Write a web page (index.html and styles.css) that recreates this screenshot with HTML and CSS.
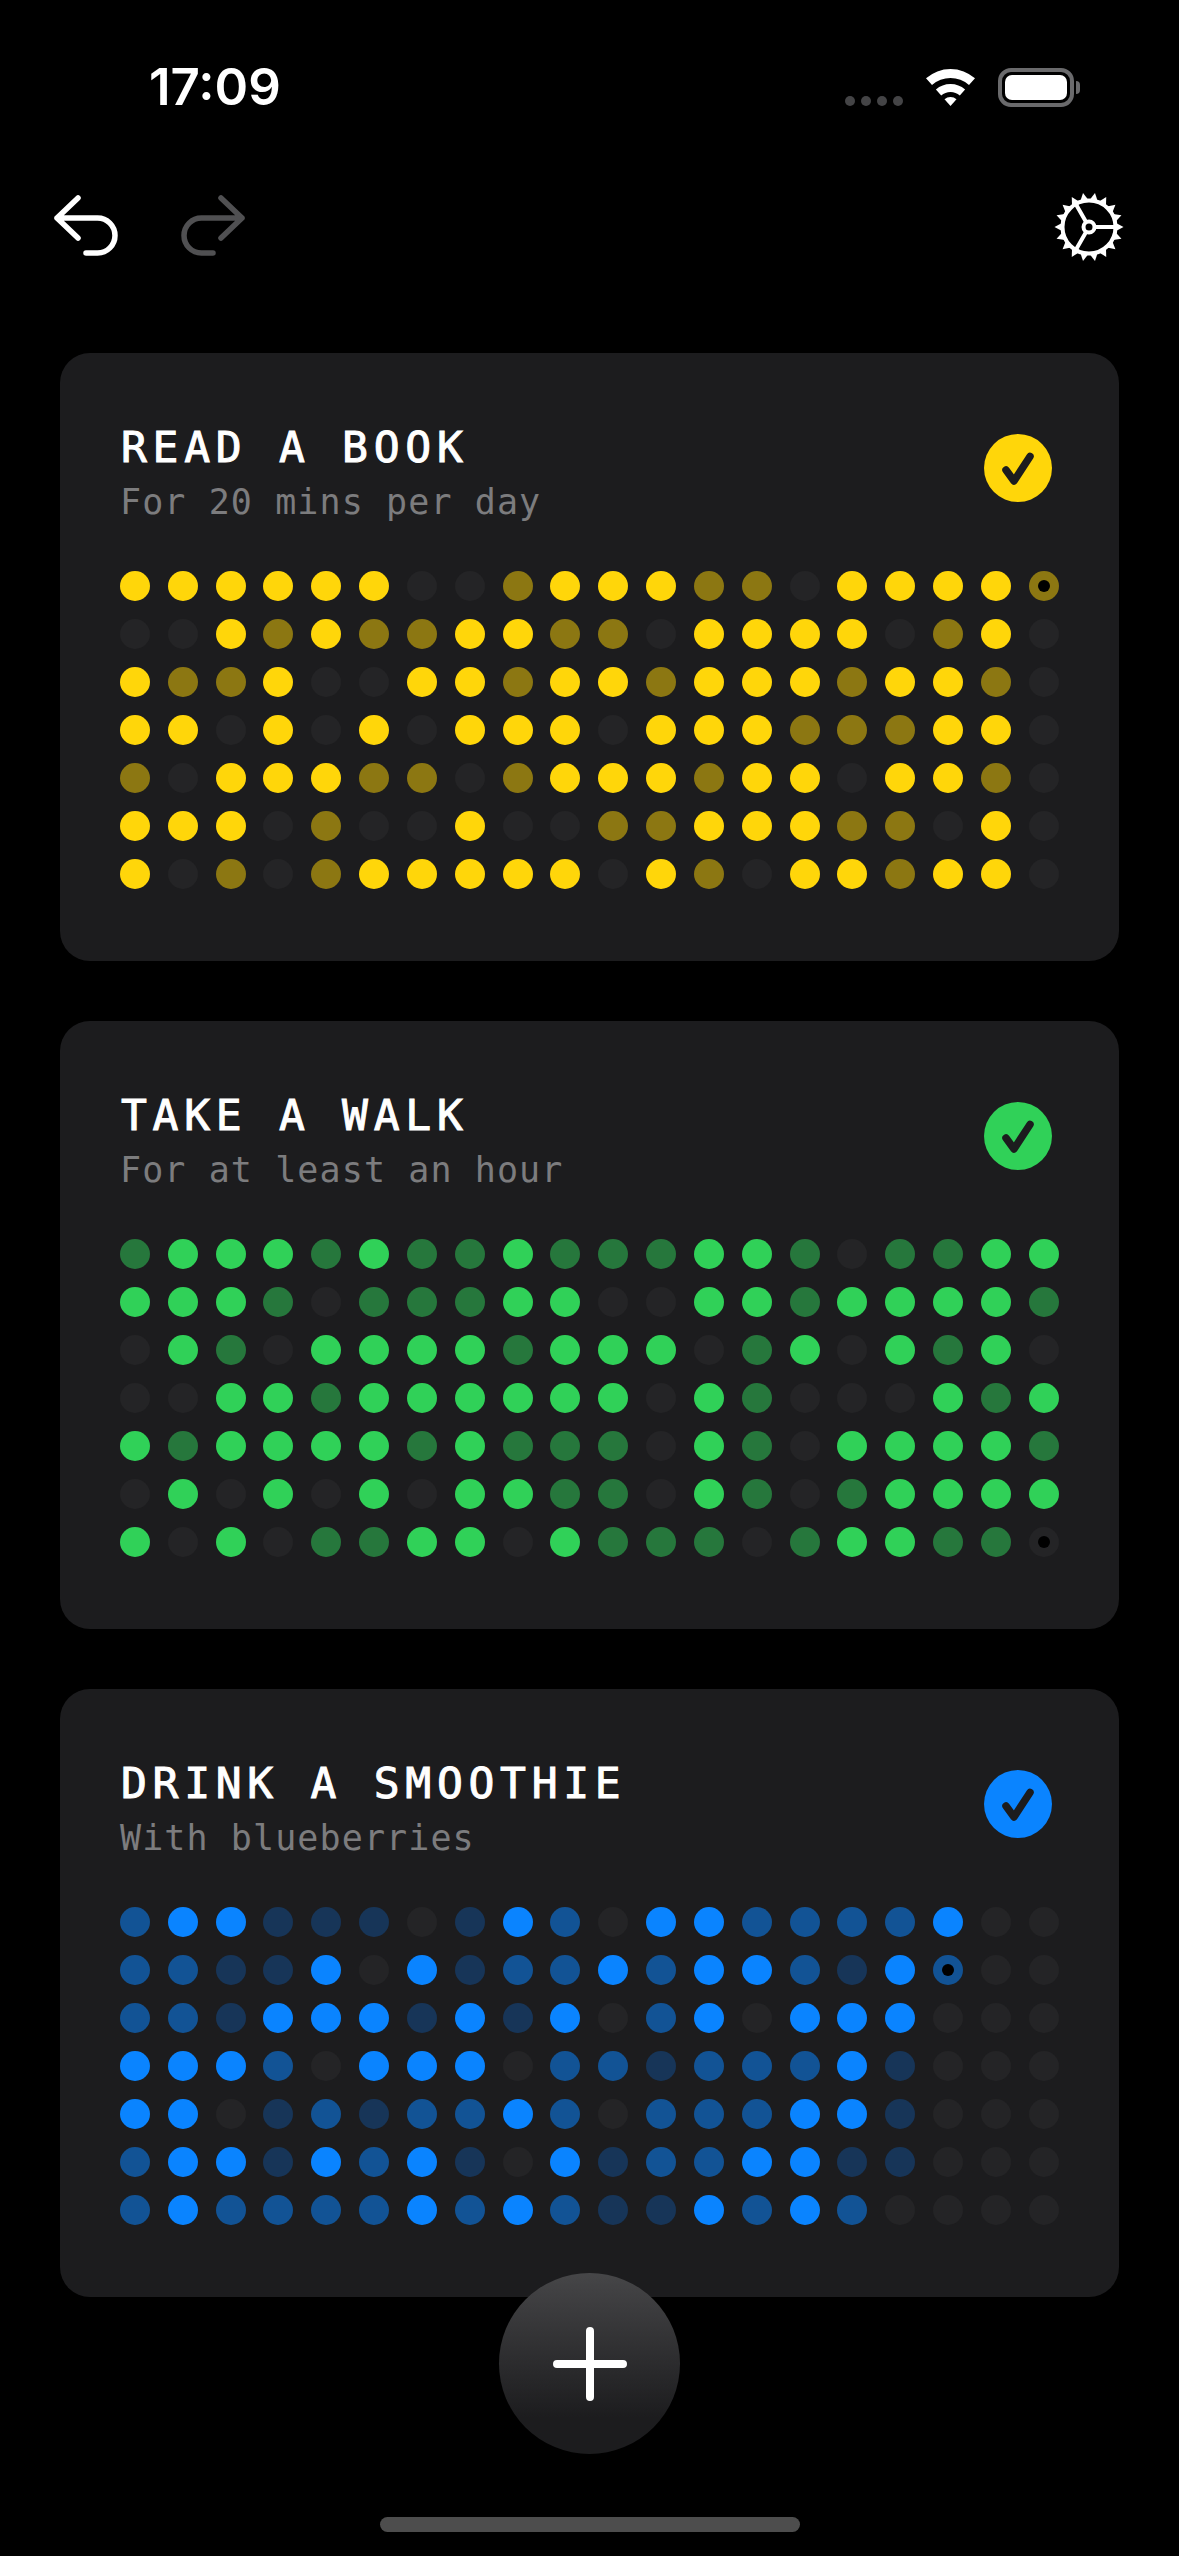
FILE: index.html
```html
<!DOCTYPE html>
<html lang="en">
<head>
    <meta charset="UTF-8">
    <meta name="viewport" content="width=device-width, initial-scale=1.0">
    <title>Habits</title>
    <link rel="stylesheet" href="styles.css">
</head>
<body>

<div class="status-bar">
    <span class="time">17:09</span>
    <div class="status-icons">
        <div class="signal"><i></i><i></i><i></i><i></i></div>
        <svg class="wifi" width="49" height="37" viewBox="0 0 49 37">
            <path d="M0 9.3A37 37 0 0 1 49 9.3L43 16A28 28 0 0 0 6 16z"/>
            <path d="M9.9 20.5A22 22 0 0 1 39.1 20.5L33.8 26.5A14 14 0 0 0 15.2 26.5z"/>
            <path d="M24.5 37L18.5 30.3A9 9 0 0 1 30.5 30.3z"/>
        </svg>
        <div class="battery"><div class="battery-level"></div></div>
    </div>
</div>

<div class="toolbar">
    <div class="history">
        <svg width="64" height="60" viewBox="0 0 64 60" class="nav-icon">
            <path d="M24 4L3 24L24 44M3 24H43.500A17.500 17.500 0 0 1 43.500 59H32"/>
        </svg>
        <svg width="64" height="60" viewBox="0 0 64 60" class="nav-icon off">
            <path d="M40 4L61 24L40 44M61 24H20.500A17.500 17.500 0 0 0 20.500 59H32"/>
        </svg>
    </div>
    <svg class="gear" width="70" height="70" viewBox="-35 -35 70 70">
        <defs><path id="tooth" d="M-4 -27L0 -34.500L4 -27z"/></defs>
        <use href="#tooth" transform="rotate(10)"/>
        <use href="#tooth" transform="rotate(30)"/>
        <use href="#tooth" transform="rotate(50)"/>
        <use href="#tooth" transform="rotate(70)"/>
        <use href="#tooth" transform="rotate(90)"/>
        <use href="#tooth" transform="rotate(110)"/>
        <use href="#tooth" transform="rotate(130)"/>
        <use href="#tooth" transform="rotate(150)"/>
        <use href="#tooth" transform="rotate(170)"/>
        <use href="#tooth" transform="rotate(190)"/>
        <use href="#tooth" transform="rotate(210)"/>
        <use href="#tooth" transform="rotate(230)"/>
        <use href="#tooth" transform="rotate(250)"/>
        <use href="#tooth" transform="rotate(270)"/>
        <use href="#tooth" transform="rotate(290)"/>
        <use href="#tooth" transform="rotate(310)"/>
        <use href="#tooth" transform="rotate(330)"/>
        <use href="#tooth" transform="rotate(350)"/>
        <circle class="gear-line" r="26.500"/>
        <circle class="gear-line" r="5.500"/>
        <path class="gear-line" d="M5.500 0H27M-2.800 -4.800L-13.500 -23.400M-2.800 4.800L-13.500 23.400"/>
    </svg>
</div>

<div class="cards">

    <section class="card yellow">
        <div class="card-head">
            <div>
                <h2>READ A BOOK</h2>
                <p>For 20 mins per day</p>
            </div>
            <div class="check"><svg width="68" height="68" viewBox="0 0 68 68"><path d="M22 36L30 47L46 22.500"/></svg></div>
        </div>
        <div class="dots">
            <i class="on"></i><i class="on"></i><i class="on"></i><i class="on"></i><i class="on"></i><i class="on"></i><i></i><i></i><i class="mid"></i><i class="on"></i><i class="on"></i><i class="on"></i><i class="mid"></i><i class="mid"></i><i></i><i class="on"></i><i class="on"></i><i class="on"></i><i class="on"></i><i class="mid today"></i>
            <i></i><i></i><i class="on"></i><i class="mid"></i><i class="on"></i><i class="mid"></i><i class="mid"></i><i class="on"></i><i class="on"></i><i class="mid"></i><i class="mid"></i><i></i><i class="on"></i><i class="on"></i><i class="on"></i><i class="on"></i><i></i><i class="mid"></i><i class="on"></i><i></i>
            <i class="on"></i><i class="mid"></i><i class="mid"></i><i class="on"></i><i></i><i></i><i class="on"></i><i class="on"></i><i class="mid"></i><i class="on"></i><i class="on"></i><i class="mid"></i><i class="on"></i><i class="on"></i><i class="on"></i><i class="mid"></i><i class="on"></i><i class="on"></i><i class="mid"></i><i></i>
            <i class="on"></i><i class="on"></i><i></i><i class="on"></i><i></i><i class="on"></i><i></i><i class="on"></i><i class="on"></i><i class="on"></i><i></i><i class="on"></i><i class="on"></i><i class="on"></i><i class="mid"></i><i class="mid"></i><i class="mid"></i><i class="on"></i><i class="on"></i><i></i>
            <i class="mid"></i><i></i><i class="on"></i><i class="on"></i><i class="on"></i><i class="mid"></i><i class="mid"></i><i></i><i class="mid"></i><i class="on"></i><i class="on"></i><i class="on"></i><i class="mid"></i><i class="on"></i><i class="on"></i><i></i><i class="on"></i><i class="on"></i><i class="mid"></i><i></i>
            <i class="on"></i><i class="on"></i><i class="on"></i><i></i><i class="mid"></i><i></i><i></i><i class="on"></i><i></i><i></i><i class="mid"></i><i class="mid"></i><i class="on"></i><i class="on"></i><i class="on"></i><i class="mid"></i><i class="mid"></i><i></i><i class="on"></i><i></i>
            <i class="on"></i><i></i><i class="mid"></i><i></i><i class="mid"></i><i class="on"></i><i class="on"></i><i class="on"></i><i class="on"></i><i class="on"></i><i></i><i class="on"></i><i class="mid"></i><i></i><i class="on"></i><i class="on"></i><i class="mid"></i><i class="on"></i><i class="on"></i><i></i>
        </div>
    </section>

    <section class="card green">
        <div class="card-head">
            <div>
                <h2>TAKE A WALK</h2>
                <p>For at least an hour</p>
            </div>
            <div class="check"><svg width="68" height="68" viewBox="0 0 68 68"><path d="M22 36L30 47L46 22.500"/></svg></div>
        </div>
        <div class="dots">
            <i class="mid"></i><i class="on"></i><i class="on"></i><i class="on"></i><i class="mid"></i><i class="on"></i><i class="mid"></i><i class="mid"></i><i class="on"></i><i class="mid"></i><i class="mid"></i><i class="mid"></i><i class="on"></i><i class="on"></i><i class="mid"></i><i></i><i class="mid"></i><i class="mid"></i><i class="on"></i><i class="on"></i>
            <i class="on"></i><i class="on"></i><i class="on"></i><i class="mid"></i><i></i><i class="mid"></i><i class="mid"></i><i class="mid"></i><i class="on"></i><i class="on"></i><i></i><i></i><i class="on"></i><i class="on"></i><i class="mid"></i><i class="on"></i><i class="on"></i><i class="on"></i><i class="on"></i><i class="mid"></i>
            <i></i><i class="on"></i><i class="mid"></i><i></i><i class="on"></i><i class="on"></i><i class="on"></i><i class="on"></i><i class="mid"></i><i class="on"></i><i class="on"></i><i class="on"></i><i></i><i class="mid"></i><i class="on"></i><i></i><i class="on"></i><i class="mid"></i><i class="on"></i><i></i>
            <i></i><i></i><i class="on"></i><i class="on"></i><i class="mid"></i><i class="on"></i><i class="on"></i><i class="on"></i><i class="on"></i><i class="on"></i><i class="on"></i><i></i><i class="on"></i><i class="mid"></i><i></i><i></i><i></i><i class="on"></i><i class="mid"></i><i class="on"></i>
            <i class="on"></i><i class="mid"></i><i class="on"></i><i class="on"></i><i class="on"></i><i class="on"></i><i class="mid"></i><i class="on"></i><i class="mid"></i><i class="mid"></i><i class="mid"></i><i></i><i class="on"></i><i class="mid"></i><i></i><i class="on"></i><i class="on"></i><i class="on"></i><i class="on"></i><i class="mid"></i>
            <i></i><i class="on"></i><i></i><i class="on"></i><i></i><i class="on"></i><i></i><i class="on"></i><i class="on"></i><i class="mid"></i><i class="mid"></i><i></i><i class="on"></i><i class="mid"></i><i></i><i class="mid"></i><i class="on"></i><i class="on"></i><i class="on"></i><i class="on"></i>
            <i class="on"></i><i></i><i class="on"></i><i></i><i class="mid"></i><i class="mid"></i><i class="on"></i><i class="on"></i><i></i><i class="on"></i><i class="mid"></i><i class="mid"></i><i class="mid"></i><i></i><i class="mid"></i><i class="on"></i><i class="on"></i><i class="mid"></i><i class="mid"></i><i class="today"></i>
        </div>
    </section>

    <section class="card blue">
        <div class="card-head">
            <div>
                <h2>DRINK A SMOOTHIE</h2>
                <p>With blueberries</p>
            </div>
            <div class="check"><svg width="68" height="68" viewBox="0 0 68 68"><path d="M22 36L30 47L46 22.500"/></svg></div>
        </div>
        <div class="dots">
            <i class="mid"></i><i class="on"></i><i class="on"></i><i class="low"></i><i class="low"></i><i class="low"></i><i></i><i class="low"></i><i class="on"></i><i class="mid"></i><i></i><i class="on"></i><i class="on"></i><i class="mid"></i><i class="mid"></i><i class="mid"></i><i class="mid"></i><i class="on"></i><i></i><i></i>
            <i class="mid"></i><i class="mid"></i><i class="low"></i><i class="low"></i><i class="on"></i><i></i><i class="on"></i><i class="low"></i><i class="mid"></i><i class="mid"></i><i class="on"></i><i class="mid"></i><i class="on"></i><i class="on"></i><i class="mid"></i><i class="low"></i><i class="on"></i><i class="mid today"></i><i></i><i></i>
            <i class="mid"></i><i class="mid"></i><i class="low"></i><i class="on"></i><i class="on"></i><i class="on"></i><i class="low"></i><i class="on"></i><i class="low"></i><i class="on"></i><i></i><i class="mid"></i><i class="on"></i><i></i><i class="on"></i><i class="on"></i><i class="on"></i><i></i><i></i><i></i>
            <i class="on"></i><i class="on"></i><i class="on"></i><i class="mid"></i><i></i><i class="on"></i><i class="on"></i><i class="on"></i><i></i><i class="mid"></i><i class="mid"></i><i class="low"></i><i class="mid"></i><i class="mid"></i><i class="mid"></i><i class="on"></i><i class="low"></i><i></i><i></i><i></i>
            <i class="on"></i><i class="on"></i><i></i><i class="low"></i><i class="mid"></i><i class="low"></i><i class="mid"></i><i class="mid"></i><i class="on"></i><i class="mid"></i><i></i><i class="mid"></i><i class="mid"></i><i class="mid"></i><i class="on"></i><i class="on"></i><i class="low"></i><i></i><i></i><i></i>
            <i class="mid"></i><i class="on"></i><i class="on"></i><i class="low"></i><i class="on"></i><i class="mid"></i><i class="on"></i><i class="low"></i><i></i><i class="on"></i><i class="low"></i><i class="mid"></i><i class="mid"></i><i class="on"></i><i class="on"></i><i class="low"></i><i class="low"></i><i></i><i></i><i></i>
            <i class="mid"></i><i class="on"></i><i class="mid"></i><i class="mid"></i><i class="mid"></i><i class="mid"></i><i class="on"></i><i class="mid"></i><i class="on"></i><i class="mid"></i><i class="low"></i><i class="low"></i><i class="on"></i><i class="mid"></i><i class="on"></i><i class="mid"></i><i></i><i></i><i></i><i></i>
        </div>
    </section>

</div>

<button class="add-button">
    <svg width="74" height="74" viewBox="0 0 74 74"><path d="M37 4V70M4 37H70"/></svg>
</button>

<div class="home-bar"></div>

</body>
</html>
```

FILE: styles.css
```css
/* Page */
body {
    background-color: #000000;
    color: #ffffff;
    font-family: "DejaVu Sans Mono", monospace;
    margin: 0;
    width: 1179px;
    height: 2556px;
    position: relative;
    overflow: hidden;
}

/* Status bar */
.status-bar {
    height: 170px;
    padding: 56px 105px 0 149px;
    box-sizing: border-box;
    display: flex;
    justify-content: space-between;
    align-items: flex-start;
}

.time {
    font-family: Inter, sans-serif;
    font-size: 51px;
    font-weight: 600;
    line-height: 62px;
}

.status-icons {
    display: flex;
    align-items: flex-end;
    margin-top: 12px;
}

.signal {
    display: flex;
    gap: 6px;
    margin-right: 23px;
}

.signal i {
    width: 10px;
    height: 10px;
    border-radius: 50%;
    background-color: #444446;
}

.wifi {
    fill: #ffffff;
    margin-right: 23px;
}

.battery {
    width: 76px;
    height: 39px;
    box-sizing: border-box;
    border: 4px solid #6a6a6c;
    border-radius: 13px;
    padding: 3px;
    position: relative;
    margin-bottom: -1px;
}

.battery::after {
    content: "";
    position: absolute;
    right: -10px;
    top: 9px;
    width: 4px;
    height: 13px;
    background-color: #6a6a6c;
    border-radius: 0 6px 6px 0;
}

.battery-level {
    height: 100%;
    background-color: #ffffff;
    border-radius: 7px;
}

/* Undo, redo, settings */
.toolbar {
    height: 183px;
    padding: 22px 55px 0 54px;
    box-sizing: border-box;
    display: flex;
    justify-content: space-between;
    align-items: flex-start;
}

.history {
    display: flex;
    gap: 63px;
    padding-top: 2px;
}

.nav-icon {
    fill: none;
    stroke: #ffffff;
    stroke-width: 5.500;
    stroke-linecap: round;
    stroke-linejoin: round;
    overflow: visible;
}

.nav-icon.off {
    stroke: #505052;
}

.gear {
    fill: #ffffff;
}

.gear-line {
    fill: none;
    stroke: #ffffff;
    stroke-width: 4;
}

/* Habit cards */
.cards {
    display: flex;
    flex-direction: column;
    gap: 60px;
    margin: 0 60px;
}

.card {
    height: 608px;
    box-sizing: border-box;
    background-color: #1c1c1e;
    border-radius: 30px;
    padding: 68px 60px 0;
}

.card-head {
    height: 150px;
    display: flex;
    justify-content: space-between;
    align-items: flex-start;
}

h2 {
    font-size: 43px;
    font-weight: 400;
    line-height: 55px;
    letter-spacing: 5.700px;
    margin: -1px 0 2px 1px;
    -webkit-text-stroke: 1px #ffffff;
}

.card-head p {
    font-size: 35px;
    line-height: 50px;
    letter-spacing: 1.100px;
    color: #7c7c7e;
    margin: 0;
}

.check {
    width: 68px;
    height: 68px;
    border-radius: 50%;
    margin: 13px 7px 0 0;
}

.check svg {
    display: block;
    fill: none;
    stroke: #1c1c1e;
    stroke-width: 7.500;
    stroke-linecap: round;
    stroke-linejoin: round;
}

.dots {
    display: grid;
    grid-template-columns: repeat(20, 30px);
    justify-content: space-between;
    row-gap: 18px;
}

.dots i {
    width: 30px;
    height: 30px;
    border-radius: 50%;
    background-color: #242426;
    display: flex;
    align-items: center;
    justify-content: center;
}

.dots i.today::after {
    content: "";
    width: 12px;
    height: 12px;
    border-radius: 50%;
    background-color: #000000;
}

.yellow .check, .yellow i.on { background-color: #ffd60a; }
.yellow i.mid { background-color: #8c7712; }

.green .check, .green i.on { background-color: #30d158; }
.green i.mid { background-color: #26773c; }

.blue .check, .blue i.on { background-color: #0a84ff; }
.blue i.mid { background-color: #125395; }
.blue i.low { background-color: #173558; }

/* Add button sits over the last card */
.add-button {
    position: absolute;
    left: 499px;
    top: 2273px;
    width: 181px;
    height: 181px;
    padding: 0;
    border: none;
    border-radius: 50%;
    background: linear-gradient(#464648, #1c1c1e 80%);
    display: flex;
    align-items: center;
    justify-content: center;
}

.add-button svg {
    fill: none;
    stroke: #ffffff;
    stroke-width: 8;
    stroke-linecap: round;
}

.home-bar {
    position: absolute;
    left: 380px;
    top: 2517px;
    width: 420px;
    height: 15px;
    border-radius: 8px;
    background-color: #4d4d4d;
}
```
